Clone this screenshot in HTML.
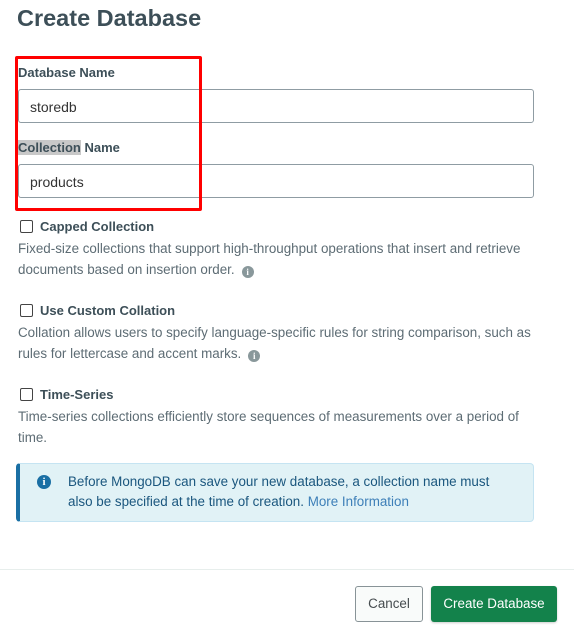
<!DOCTYPE html>
<html><head><style>
body{margin:0;width:574px;height:632px;background:#fff;font-family:"Liberation Sans",sans-serif;color:#494747;position:relative;overflow:hidden}
.a{position:absolute}
h1{position:absolute;left:17px;top:5px;margin:0;font-size:23.5px;font-weight:bold;color:#3d4f58}
.lbl{font-size:13px;font-weight:bold;color:#3d4f58}
.inp{position:absolute;left:18px;width:516px;height:34px;border:1px solid #8f9ca3;border-radius:3px;box-sizing:border-box;font-size:14px;color:#333;padding:9px 11px}
.cb{position:absolute;left:20px;width:11px;height:11px;border:1px solid #444;border-radius:2px}
.ct{font-size:13px;font-weight:bold;color:#3d4f58}
.d{font-size:13.4px;color:#5d6c74;line-height:21px}
.i{display:inline-block;width:12px;height:12px;border-radius:50%;background:#89989b;color:#fff;font-size:9px;font-weight:bold;text-align:center;line-height:12px;vertical-align:-1px;margin-left:7px;font-family:"Liberation Serif",serif}
</style></head><body>
<h1>Create Database</h1>
<div class="a lbl" style="left:18px;top:65px">Database Name</div>
<div class="inp" style="top:89px">storedb</div>
<div class="a lbl" style="left:18px;top:140px"><span style="background:#c8c8c8">Collection</span> Name</div>
<div class="inp" style="top:164px">products</div>
<div class="a" style="left:15px;top:56px;width:181px;height:149px;border:3px solid #f00;border-radius:2px"></div>
<div class="cb" style="top:220px"></div><div class="a ct" style="left:40px;top:219px">Capped Collection</div>
<div class="a d" style="left:18px;top:238px;width:520px">Fixed-size collections that support high-throughput operations that insert and retrieve documents based on insertion order.<span class="i">i</span></div>
<div class="cb" style="top:304px"></div><div class="a ct" style="left:40px;top:303px">Use Custom Collation</div>
<div class="a d" style="left:18px;top:322px;width:520px">Collation allows users to specify language-specific rules for string comparison, such as rules for lettercase and accent marks.<span class="i">i</span></div>
<div class="cb" style="top:388px"></div><div class="a ct" style="left:40px;top:387px">Time-Series</div>
<div class="a d" style="left:18px;top:406px;width:520px">Time-series collections efficiently store sequences of measurements over a period of time.</div>
<div class="a" style="left:16px;top:463px;width:518px;height:59px;background:#e1f2f6;border:1px solid #c5e4f2;border-left:4px solid #1a6fa4;border-radius:4px;box-sizing:border-box"></div>
<div class="a" style="left:37px;top:475px;width:14px;height:14px;border-radius:50%;background:#1a6fa4;color:#fff;font-size:11px;font-weight:bold;text-align:center;line-height:14px;font-family:'Liberation Serif',serif">i</div>
<div class="a" style="left:68px;top:472px;font-size:13.4px;line-height:20px;color:#1a567e;width:440px">Before MongoDB can save your new database, a collection name must also be specified at the time of creation. <span style="color:#3d7fb8">More Information</span></div>
<div class="a" style="left:0;top:569px;width:574px;height:1px;background:#e7eeec"></div>
<div class="a" style="left:355px;top:586px;width:68px;height:36px;border:1px solid #889397;border-radius:3px;background:#f9fbfa;box-sizing:border-box;font-size:13.4px;color:#464c4f;text-align:center;line-height:34px">Cancel</div>
<div class="a" style="left:431px;top:586px;width:126px;height:36px;border-radius:3px;background:#13824b;font-size:13.4px;color:#fff;text-align:center;line-height:36px;box-shadow:0 1px 2px rgba(0,0,0,.2)">Create Database</div>
</body></html>
